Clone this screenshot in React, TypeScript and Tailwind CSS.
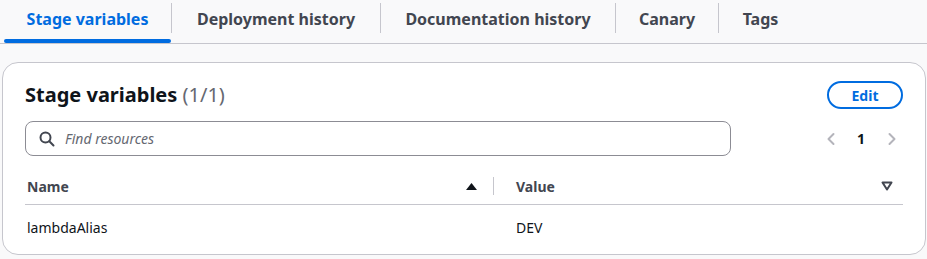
import React from "react";

const tabs = [
  { label: "Stage variables", w: "w-[167px]", active: true },
  { label: "Deployment history", w: "w-[208px]" },
  { label: "Documentation history", w: "w-[234px]" },
  { label: "Canary", w: "w-[102px]" },
  { label: "Tags", w: "w-[83px]" },
];

export default function App() {
  return (
    <div
      className="w-[927px] h-[259px] bg-[#f9f9fa] overflow-hidden"
      style={{ fontFamily: '"Noto Sans", "Open Sans", sans-serif' }}
    >
      {/* Tabs */}
      <div className="flex h-[44px] border-b border-[#c6c6cd]">
        <div className="w-[4px]" />
        {tabs.map((t, i) => (
          <React.Fragment key={t.label}>
            {i > 0 && <div className="w-px h-[30px] mt-[3px] bg-[#c6c6cd]" />}
            <div
              className={`relative ${t.w} h-[43px] pb-[5px] flex items-center justify-center text-[16px] font-bold ${
                t.active ? "text-[#006ce0]" : "text-[#424650]"
              }`}
            >
              {t.label}
              {t.active && (
                <div className="absolute left-0 right-0 bottom-0 h-[4px] rounded-full bg-[#006ce0]" />
              )}
            </div>
          </React.Fragment>
        ))}
      </div>

      {/* Card */}
      <div className="ml-[2px] mt-[18px] w-[924px] bg-white border border-[#c6c6cd] rounded-[16px] px-[22px] pt-[18px] pb-[4px]">
        <div className="flex items-center justify-between h-[28px]">
          <div className="text-[20px] font-bold text-[#0f141a] leading-none">
            Stage variables <span className="font-normal text-[#656871]">(1/1)</span>
          </div>
          <button className="w-[76px] h-[28px] rounded-full border-2 border-[#006ce0] text-[#006ce0] text-[14px] font-bold flex items-center justify-center">
            Edit
          </button>
        </div>

        <div className="mt-[12px] flex items-center justify-between h-[35px]">
          <div className="w-[706px] h-[35px] border border-[#8c8c94] rounded-[8px] flex items-center pl-[13px]">
            <svg width="16" height="16" viewBox="0 0 16 16" fill="none" stroke="#424650" strokeWidth="2" strokeLinecap="round">
              <circle cx="6.5" cy="6.5" r="5" />
              <line x1="10.3" y1="10.3" x2="14.5" y2="14.5" />
            </svg>
            <span className="ml-[10px] text-[14px] italic text-[#656871]">Find resources</span>
          </div>
          <div className="flex items-center pr-[3px]">
            <svg width="16" height="16" viewBox="0 0 16 16" fill="none" stroke="#b4b4bb" strokeWidth="2" strokeLinecap="round" strokeLinejoin="round">
              <polyline points="10.5,3 5.5,8 10.5,13" />
            </svg>
            <span className="ml-[12px] w-[20px] text-center text-[14px] font-bold text-[#0f141a]">1</span>
            <svg className="ml-[13px]" width="16" height="16" viewBox="0 0 16 16" fill="none" stroke="#b4b4bb" strokeWidth="2" strokeLinecap="round" strokeLinejoin="round">
              <polyline points="5.5,3 10.5,8 5.5,13" />
            </svg>
          </div>
        </div>

        {/* Table */}
        <div className="mt-[12px] flex items-center h-[37px] border-b border-[#c6c6cd] text-[14px] font-bold text-[#424650]">
          <div className="w-[468px] flex items-center justify-between pl-[2px] pr-[16px]">
            <span>Name</span>
            <svg width="11" height="7" viewBox="0 0 11 7">
              <polygon points="5.5,0 11,7 0,7" fill="#0f141a" />
            </svg>
          </div>
          <div className="w-px h-[18px] bg-[#c6c6cd]" />
          <div className="flex-1 flex items-center justify-between pl-[22px] pr-[10px]">
            <span>Value</span>
            <svg width="12" height="10" viewBox="0 0 12 10">
              <polygon points="1.5,1.5 10.5,1.5 6,8.5" fill="none" stroke="#424650" strokeWidth="2" strokeLinejoin="round" />
            </svg>
          </div>
        </div>
        <div className="flex items-center h-[45px] text-[14px] text-[#0f141a]">
          <div className="w-[469px] pl-[2px]">lambdaAlias</div>
          <div className="pl-[22px]">DEV</div>
        </div>
      </div>
    </div>
  );
}
